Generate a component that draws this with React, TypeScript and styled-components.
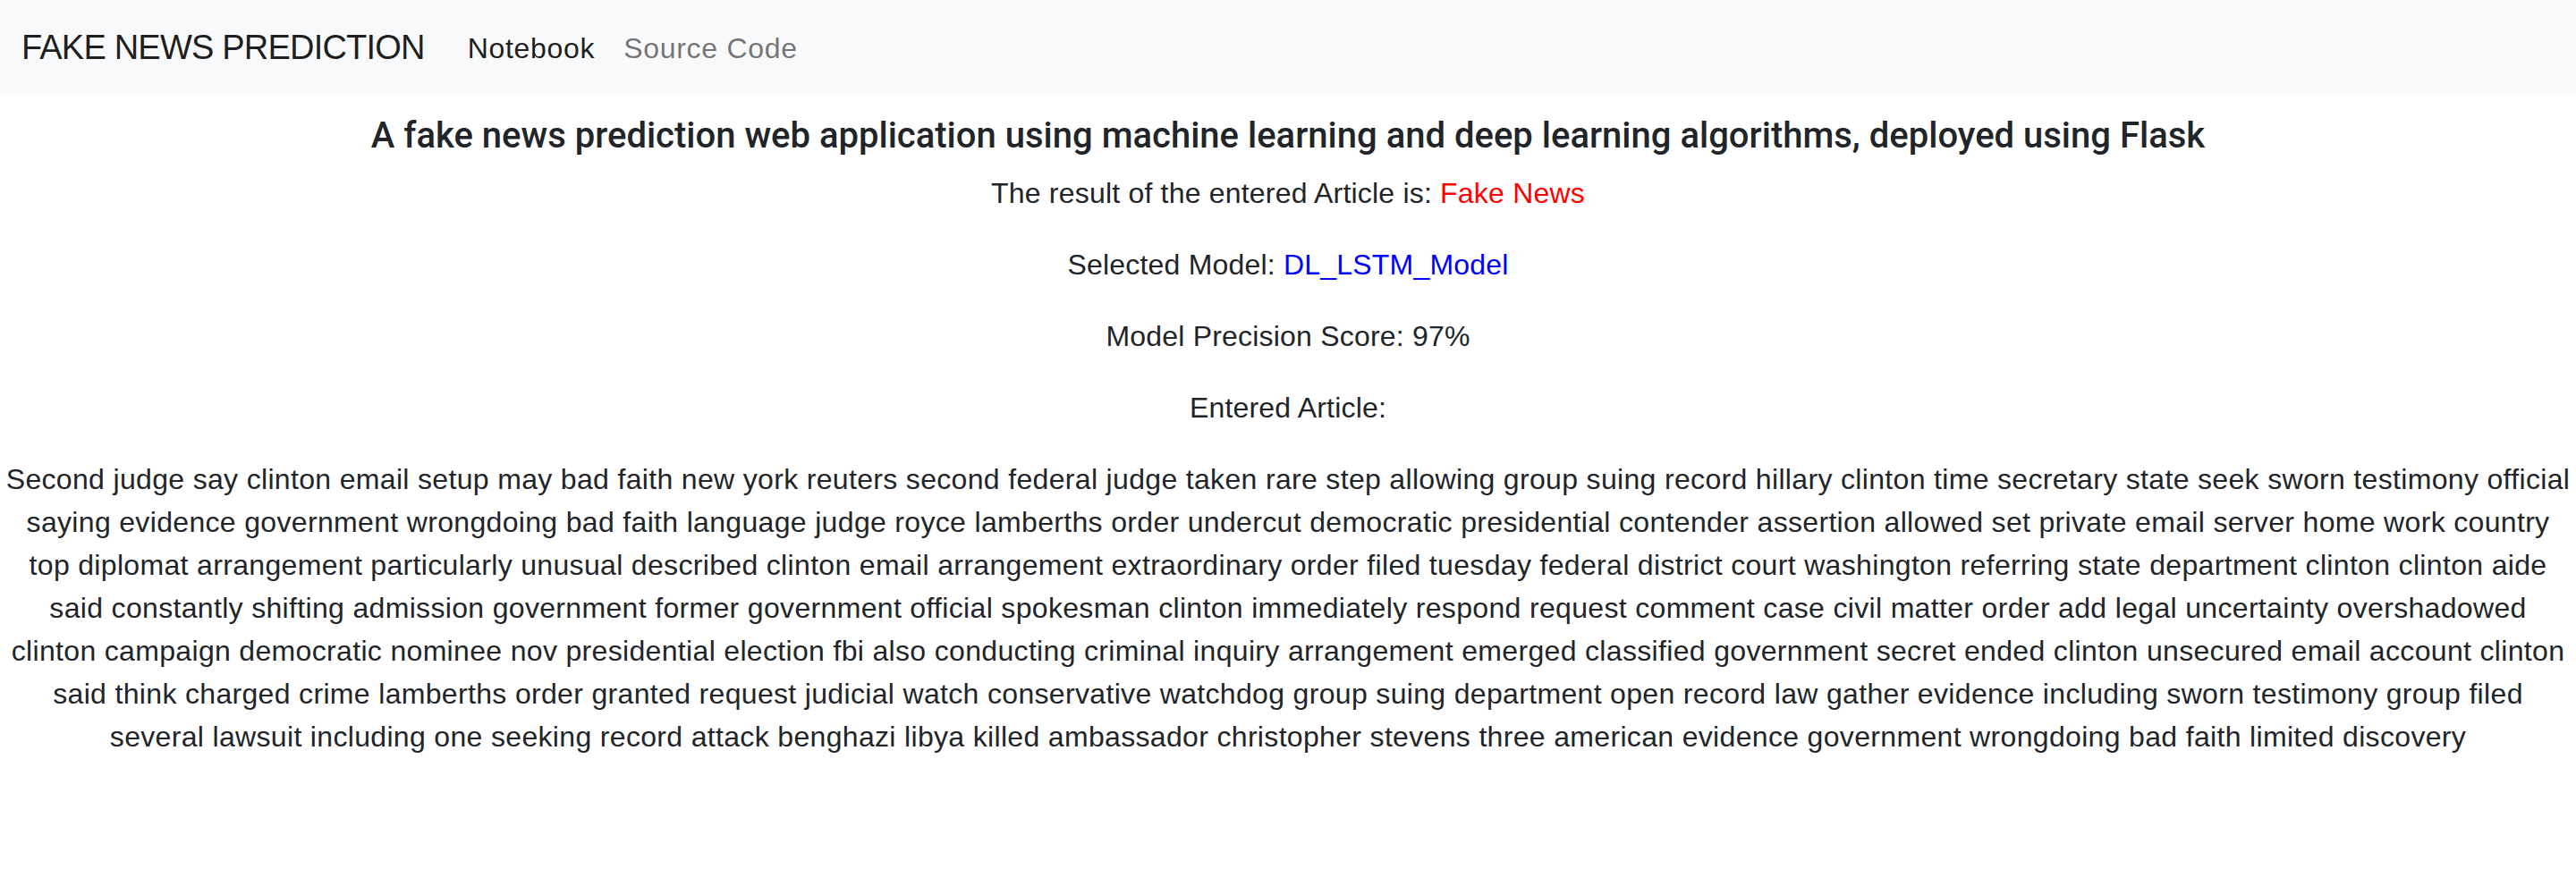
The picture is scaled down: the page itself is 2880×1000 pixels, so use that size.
import React from "react";
import styled, { createGlobalStyle } from "styled-components";

const GlobalStyle = createGlobalStyle`
  html, body {
    margin: 0;
    padding: 0;
    background: #ffffff;
  }
  body {
    font-family: "Liberation Sans", Arial, sans-serif;
    color: #212529;
    font-size: 32px;
    line-height: 48px;
  }
  * { box-sizing: border-box; }
`;

const Navbar = styled.nav`
  background: #f8f9fa;
  height: 107px;
  display: flex;
  align-items: center;
  padding: 0 24px;
`;

const Brand = styled.a`
  font-family: "Liberation Sans", Arial, sans-serif;
  font-size: 38px;
  line-height: 57px;
  letter-spacing: -0.8px;
  color: rgba(0, 0, 0, 0.9);
  text-decoration: none;
  margin-right: 32px;
  white-space: nowrap;
`;

const NavList = styled.ul`
  display: flex;
  list-style: none;
  margin: 0;
  padding: 0;
`;

const NavLink = styled.a<{ $active?: boolean }>`
  display: block;
  padding: 0 16px;
  font-size: 32px;
  line-height: 48px;
  letter-spacing: 0.7px;
  text-decoration: none;
  color: ${(p) => (p.$active ? "rgba(0, 0, 0, 0.9)" : "rgba(0, 0, 0, 0.55)")};
  white-space: nowrap;
`;

const Main = styled.main`
  padding-top: 21px;
  text-align: center;
`;

const Title = styled.h5`
  margin: 0 0 16px;
  font-family: Roboto, "Liberation Sans", sans-serif;
  font-weight: 500;
  font-size: 40px;
  line-height: 48px;
  color: #212529;
`;

const Line = styled.p`
  margin: 0 0 32px;
  font-size: 32px;
  line-height: 48px;
  letter-spacing: 0.2px;
`;

const Highlight = styled.span<{ $tone: "red" | "blue" }>`
  color: ${(p) => (p.$tone === "red" ? "#ff0000" : "#0000ff")};
`;

const Article = styled.p`
  margin: 0 0 32px;
  font-size: 32px;
  line-height: 48px;
  letter-spacing: 0.33px;
`;

const ArticleLine = styled.span`
  display: block;
  white-space: nowrap;
`;

const articleLines = [
  "Second judge say clinton email setup may bad faith new york reuters second federal judge taken rare step allowing group suing record hillary clinton time secretary state seek sworn testimony official",
  "saying evidence government wrongdoing bad faith language judge royce lamberths order undercut democratic presidential contender assertion allowed set private email server home work country",
  "top diplomat arrangement particularly unusual described clinton email arrangement extraordinary order filed tuesday federal district court washington referring state department clinton clinton aide",
  "said constantly shifting admission government former government official spokesman clinton immediately respond request comment case civil matter order add legal uncertainty overshadowed",
  "clinton campaign democratic nominee nov presidential election fbi also conducting criminal inquiry arrangement emerged classified government secret ended clinton unsecured email account clinton",
  "said think charged crime lamberths order granted request judicial watch conservative watchdog group suing department open record law gather evidence including sworn testimony group filed",
  "several lawsuit including one seeking record attack benghazi libya killed ambassador christopher stevens three american evidence government wrongdoing bad faith limited discovery",
];

export default function App() {
  return (
    <>
      <GlobalStyle />
      <Navbar>
        <Brand href="#">FAKE NEWS PREDICTION</Brand>
        <NavList>
          <li>
            <NavLink href="#" $active>
              Notebook
            </NavLink>
          </li>
          <li>
            <NavLink href="#">Source Code</NavLink>
          </li>
        </NavList>
      </Navbar>
      <Main>
        <Title>
          A fake news prediction web application using machine learning and deep learning algorithms, deployed using Flask
        </Title>
        <Line>
          The result of the entered Article is: <Highlight $tone="red">Fake News</Highlight>
        </Line>
        <Line>
          Selected Model: <Highlight $tone="blue">DL_LSTM_Model</Highlight>
        </Line>
        <Line>Model Precision Score: 97%</Line>
        <Line>Entered Article:</Line>
        <Article>
          {articleLines.map((text, i) => (
            <ArticleLine key={i}>{text}</ArticleLine>
          ))}
        </Article>
      </Main>
    </>
  );
}
